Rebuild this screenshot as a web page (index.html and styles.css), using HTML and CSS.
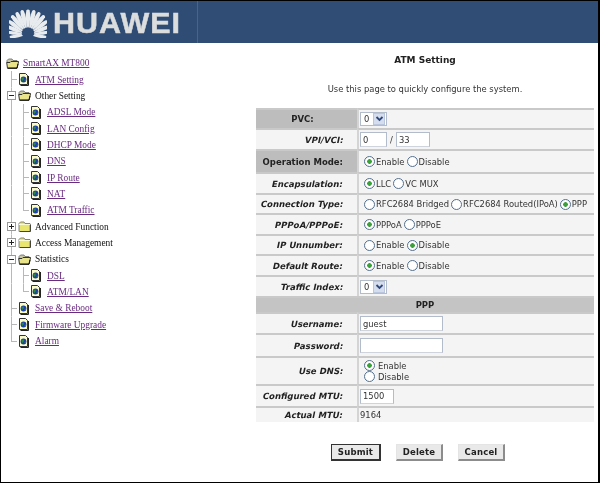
FILE: index.html
```html
<!DOCTYPE html>
<html lang="en">
<head>
<meta charset="utf-8">
<title>ATM Setting</title>
<link rel="stylesheet" href="styles.css">
</head>
<body>
<svg class="defs" width="0" height="0" aria-hidden="true">
  <symbol id="doc" viewBox="0 0 11 13">
    <path d="M1.5 .5H7.5L9.5 2.5V11.5H1.5Z" fill="#fbfbc8" stroke="#333"/>
    <path d="M2.5 12.5H10.5V3" fill="none" stroke="#222"/>
    <circle cx="5.5" cy="6.5" r="2.9" fill="#1c3fa8"/>
    <path d="M3.2 5.5 5.5 4.2 6 6 4.5 8Z" fill="#2d8a3a"/>
    <path d="M6.5 7 8.2 6.5 7.3 8.6Z" fill="#2d8a3a"/>
  </symbol>
  <symbol id="open" viewBox="0 0 13 11">
    <path d="M1 2.5 2.5 1H6L7 2.5H11V5H1Z" fill="#c9c9a8" stroke="#666" stroke-width=".8"/>
    <path d="M.7 4.5H4L5 3.5H12.6L11 10.4H1.5Z" fill="#e9e48a" stroke="#333"/>
    <path d="M2 10H11L12 6" fill="none" stroke="#111"/>
  </symbol>
  <symbol id="closed" viewBox="0 0 13 11">
    <path d="M1 2.5 2.5 1H6L7 2.5H12V10.5H1Z" fill="#e8e670" stroke="#777" stroke-width=".9"/>
    <path d="M1 3.5H12" stroke="#fafad0"/>
    <path d="M2 10.5H12.5V3.5" fill="none" stroke="#444"/>
  </symbol>
  <symbol id="petal" viewBox="-30 -30 60 60" overflow="visible">
    <path d="M-.7-7.5C-2.2-14-2.8-19-1.7-24.5-.9-26 .9-26 1.7-24.5 2.8-19 2.2-14 .7-7.5Z" fill="#e9ecee"/>
  </symbol>
  <symbol id="arrow" viewBox="0 0 9 8">
    <path d="M1.5 2 4.5 5 7.5 2" fill="none" stroke="#30487a" stroke-width="1.8"/>
  </symbol>
</svg>

<header class="top">
  <div class="logo">
    <svg class="shell" width="38" height="30" viewBox="-19 -27 38 30" aria-hidden="true">
      <g class="petals">
        <use href="#petal" x="-30" y="-30" width="60" height="60" transform="rotate(-96) scale(.72)"/>
        <use href="#petal" x="-30" y="-30" width="60" height="60" transform="rotate(-82) scale(.8)"/>
        <use href="#petal" x="-30" y="-30" width="60" height="60" transform="rotate(-68) scale(.88)"/>
        <use href="#petal" x="-30" y="-30" width="60" height="60" transform="rotate(-54) scale(.94)"/>
        <use href="#petal" x="-30" y="-30" width="60" height="60" transform="rotate(-40)"/>
        <use href="#petal" x="-30" y="-30" width="60" height="60" transform="rotate(-27)"/>
        <use href="#petal" x="-30" y="-30" width="60" height="60" transform="rotate(-14)"/>
        <use href="#petal" x="-30" y="-30" width="60" height="60"/>
        <use href="#petal" x="-30" y="-30" width="60" height="60" transform="rotate(14)"/>
        <use href="#petal" x="-30" y="-30" width="60" height="60" transform="rotate(27)"/>
        <use href="#petal" x="-30" y="-30" width="60" height="60" transform="rotate(40)"/>
        <use href="#petal" x="-30" y="-30" width="60" height="60" transform="rotate(54) scale(.94)"/>
        <use href="#petal" x="-30" y="-30" width="60" height="60" transform="rotate(68) scale(.88)"/>
        <use href="#petal" x="-30" y="-30" width="60" height="60" transform="rotate(82) scale(.8)"/>
        <use href="#petal" x="-30" y="-30" width="60" height="60" transform="rotate(96) scale(.72)"/>
      </g>
    </svg>
    <span class="brand">HUAWEI</span>
  </div>
</header>

<div class="content">
  <nav class="tree">
    <div class="row"><span class="ico"><svg width="13" height="11"><use href="#open"/></svg></span><a href="#">SmartAX MT800</a></div>
    <div class="row"><span class="c tee"></span><span class="ico"><svg width="11" height="13"><use href="#doc"/></svg></span><a href="#">ATM Setting</a></div>
    <div class="row"><span class="c v"><i class="box minus"></i></span><span class="ico"><svg width="13" height="11"><use href="#open"/></svg></span><span class="lbl">Other Setting</span></div>
    <div class="row"><span class="c v"></span><span class="c tee"></span><span class="ico"><svg width="11" height="13"><use href="#doc"/></svg></span><a href="#">ADSL Mode</a></div>
    <div class="row"><span class="c v"></span><span class="c tee"></span><span class="ico"><svg width="11" height="13"><use href="#doc"/></svg></span><a href="#">LAN Config</a></div>
    <div class="row"><span class="c v"></span><span class="c tee"></span><span class="ico"><svg width="11" height="13"><use href="#doc"/></svg></span><a href="#">DHCP Mode</a></div>
    <div class="row"><span class="c v"></span><span class="c tee"></span><span class="ico"><svg width="11" height="13"><use href="#doc"/></svg></span><a href="#">DNS</a></div>
    <div class="row"><span class="c v"></span><span class="c tee"></span><span class="ico"><svg width="11" height="13"><use href="#doc"/></svg></span><a href="#">IP Route</a></div>
    <div class="row"><span class="c v"></span><span class="c tee"></span><span class="ico"><svg width="11" height="13"><use href="#doc"/></svg></span><a href="#">NAT</a></div>
    <div class="row"><span class="c v"></span><span class="c end"></span><span class="ico"><svg width="11" height="13"><use href="#doc"/></svg></span><a href="#">ATM Traffic</a></div>
    <div class="row"><span class="c v"><i class="box plus"></i></span><span class="ico"><svg width="13" height="11"><use href="#closed"/></svg></span><span class="lbl">Advanced Function</span></div>
    <div class="row"><span class="c v"><i class="box plus"></i></span><span class="ico"><svg width="13" height="11"><use href="#closed"/></svg></span><span class="lbl">Access Management</span></div>
    <div class="row"><span class="c v"><i class="box minus"></i></span><span class="ico"><svg width="13" height="11"><use href="#open"/></svg></span><span class="lbl">Statistics</span></div>
    <div class="row"><span class="c v"></span><span class="c tee"></span><span class="ico"><svg width="11" height="13"><use href="#doc"/></svg></span><a href="#">DSL</a></div>
    <div class="row"><span class="c v"></span><span class="c end"></span><span class="ico"><svg width="11" height="13"><use href="#doc"/></svg></span><a href="#">ATM/LAN</a></div>
    <div class="row"><span class="c tee"></span><span class="ico"><svg width="11" height="13"><use href="#doc"/></svg></span><a href="#">Save &amp; Reboot</a></div>
    <div class="row"><span class="c tee"></span><span class="ico"><svg width="11" height="13"><use href="#doc"/></svg></span><a href="#">Firmware Upgrade</a></div>
    <div class="row"><span class="c end"></span><span class="ico"><svg width="11" height="13"><use href="#doc"/></svg></span><a href="#">Alarm</a></div>
  </nav>

  <main class="main">
    <h1>ATM Setting</h1>
    <p class="intro">Use this page to quickly configure the system.</p>
    <form>
      <table class="form">
        <tr class="h20"><th class="grey center">PVC:</th><td><span class="sel"><span class="selv">0</span><span class="btn"><svg width="9" height="8"><use href="#arrow"/></svg></span></span></td></tr>
        <tr class="h21"><th><span class="slant">VPI/VCI:</span></th><td><input class="t w27" type="text" value="0"><span class="sl">/</span><input class="t w34" type="text" value="33"></td></tr>
        <tr class="h23"><th class="grey">Operation Mode:</th><td><label><input type="radio" name="op" checked>Enable</label><label><input type="radio" name="op">Disable</label></td></tr>
        <tr class="h21"><th><span class="slant">Encapsulation:</span></th><td><label><input type="radio" name="en" checked>LLC</label><label><input type="radio" name="en">VC MUX</label></td></tr>
        <tr class="h20"><th><span class="slant">Connection Type:</span></th><td><label><input type="radio" name="ct">RFC2684 Bridged</label><label><input type="radio" name="ct">RFC2684 Routed(IPoA)</label><label><input type="radio" name="ct" checked>PPP</label></td></tr>
        <tr class="h21"><th><span class="slant">PPPoA/PPPoE:</span></th><td><label><input type="radio" name="pp" checked>PPPoA</label><label><input type="radio" name="pp">PPPoE</label></td></tr>
        <tr class="h20"><th><span class="slant">IP Unnumber:</span></th><td><label><input type="radio" name="ip">Enable</label><label><input type="radio" name="ip" checked>Disable</label></td></tr>
        <tr class="h21"><th><span class="slant">Default Route:</span></th><td><label><input type="radio" name="dr" checked>Enable</label><label><input type="radio" name="dr">Disable</label></td></tr>
        <tr class="h21"><th><span class="slant">Traffic Index:</span></th><td><span class="sel"><span class="selv">0</span><span class="btn"><svg width="9" height="8"><use href="#arrow"/></svg></span></span></td></tr>
        <tr class="h16"><th class="band" colspan="2">PPP</th></tr>
        <tr class="h21"><th><span class="slant">Username:</span></th><td><input class="t w83" type="text" value="guest"></td></tr>
        <tr class="h23"><th><span class="slant">Password:</span></th><td><input class="t w83" type="password"></td></tr>
        <tr class="h28"><th><span class="slant">Use DNS:</span></th><td class="stack"><label><input type="radio" name="dns" checked>Enable</label><label><input type="radio" name="dns">Disable</label></td></tr>
        <tr class="h22"><th><span class="slant">Configured MTU:</span></th><td><input class="t w34" type="text" value="1500"></td></tr>
        <tr class="h16"><th><span class="slant">Actual MTU:</span></th><td class="val">9164</td></tr>
      </table>
      <div class="actions">
        <button type="button" class="b first">Submit</button>
        <button type="button" class="b">Delete</button>
        <button type="button" class="b">Cancel</button>
      </div>
    </form>
  </main>
</div>
</body>
</html>
```
FILE: styles.css
```css
* { box-sizing: border-box; }
html, body { margin: 0; padding: 0; }
body {
  width: 600px;
  height: 483px;
  border: 1px solid #000;
  border-right-width: 2px;
  background: #fff;
  overflow: hidden;
  display: flex;
  flex-direction: column;
  font-family: "DejaVu Sans", Verdana, sans-serif;
}
.defs { display: block; height: 0; }

/* header */
.top {
  height: 42px;
  flex: none;
  background: linear-gradient(to right, #2f4c75 196px, #46648c 196px, #46648c 197px, #304d76 197px);
}
.logo { display: flex; align-items: center; height: 100%; padding-left: 8px; filter: blur(.35px); }
.shell { flex: none; margin-top: 2px; }
.brand {
  margin: 2px 0 0 6px;
  font: bold 29px/1 "Liberation Sans", Arial, sans-serif;
  letter-spacing: 1px;
  color: #dcdddd;
  -webkit-text-stroke: .5px #dcdddd;
  transform: scaleX(1.05);
  transform-origin: left center;
}

.content { display: flex; flex: 1; min-height: 0; filter: blur(.35px); }

/* tree */
.tree { width: 255px; flex: none; padding: 12px 0 0 4px; }
.row {
  height: 16.35px;
  display: flex;
  align-items: stretch;
  font: 9.4px/16px "Liberation Serif", "Times New Roman", serif;
  white-space: nowrap;
}
.row a { color: #6a2a80; align-self: center; }
.lbl { color: #111; align-self: center; }
.c { width: 12px; flex: none; display: flex; align-items: center; justify-content: center; }
.ico { width: 18px; flex: none; display: flex; align-items: center; padding-left: 1px; }
.ico svg { display: block; }
.v { background: linear-gradient(#b8b8b8, #b8b8b8) center / 1px 100% no-repeat; }
.tee {
  background:
    linear-gradient(#b8b8b8, #b8b8b8) center / 1px 100% no-repeat,
    linear-gradient(#b8b8b8, #b8b8b8) right center / 6px 1px no-repeat;
}
.end {
  background:
    linear-gradient(#b8b8b8, #b8b8b8) 6px 0 / 1px 50% no-repeat,
    linear-gradient(#b8b8b8, #b8b8b8) right center / 6px 1px no-repeat;
}
.box {
  width: 9px; height: 9px;
  border: 1px solid #999;
  background-color: #fff;
  background-repeat: no-repeat;
}
.minus { background-image: linear-gradient(#222, #222); background-size: 5px 1px; background-position: center; }
.plus {
  background-image: linear-gradient(#222, #222), linear-gradient(#222, #222);
  background-size: 5px 1px, 1px 5px;
  background-position: center, center;
}

/* main */
.main { flex: 1; min-width: 0; padding-right: 4px; }
h1 {
  margin: 11px 0 0;
  height: 13px;
  font-size: 9px;
  line-height: 13px;
  font-weight: bold;
  text-align: center;
  color: #222;
}
.intro {
  margin: 16px 0 0;
  height: 13px;
  font-size: 8.4px;
  line-height: 13px;
  text-align: center;
  color: #333;
}
.form {
  margin-top: 12px;
  width: 338px;
  border-collapse: separate;
  border-spacing: 0;
  table-layout: fixed;
  font-size: 8.4px;
  color: #333;
}
.form th, .form td {
  padding: 0;
  background: #f4f4f4;
  border-top: 2px solid #c9c9c9;
}
.form th {
  width: 101px;
  padding-right: 14px;
  text-align: right;
  font-size: 8.5px;
  font-weight: bold;
  color: #222;
  white-space: nowrap;
}
.slant { display: inline-block; transform: skewX(-12deg); }
.form td { padding-left: 1px; border-left: 2px solid #d4d4d4; white-space: nowrap; }
.form th.grey { background: #bdbdbd; }
.form th.center { text-align: center; padding-right: 8px; }
.form th.band { background: #c4c4c4; text-align: center; padding: 0; width: auto; }
.h16 { height: 16px; }
.h20 { height: 20px; }
.h21 { height: 21px; }
.h22 { height: 22px; }
.h23 { height: 23px; }
.h28 { height: 28px; }

label { display: inline-flex; align-items: center; vertical-align: middle; }
label:first-child { margin-left: 1px; }
input[type="radio"] {
  appearance: none;
  width: 11px;
  height: 11px;
  margin: 0 1px 0 2px;
  border: 1px solid #54708f;
  border-radius: 50%;
  background: #fff;
  flex: none;
}
label:first-child input[type="radio"] { margin-left: 3px; }
input[type="radio"]:checked { background: radial-gradient(circle, #3aa03a 0 2px, #fff 2.6px); }
.stack label { display: flex; height: 11px; }
.stack label input { margin-right: 3px; }
.stack label:last-child { margin-left: 1px; }
.stack label:last-child input { margin-left: 3px; }
.val { color: #333; }

input.t {
  height: 15px;
  padding: 0 2px;
  border: 1px solid #b3bccb;
  border-bottom-color: #cfd4dc;
  background: #fff;
  font: 8.4px "DejaVu Sans", sans-serif;
  color: #333;
  vertical-align: middle;
}
.w27 { width: 27px; }
.w34 { width: 34px; }
.w83 { width: 83px; }
.sl { display: inline-block; width: 9px; text-align: center; vertical-align: middle; }

.sel {
  display: inline-flex;
  align-items: center;
  gap: 3px;
  height: 14px;
  width: 27px;
  padding: 0 1px 0 3px;
  border: 1px solid #b3bccb;
  background: #fff;
  vertical-align: middle;
}
.selv { flex: 1; }
.btn {
  width: 12px;
  height: 12px;
  display: flex;
  align-items: center;
  justify-content: center;
  background: #d5deef;
  border: 1px solid #b9c6de;
}
.btn svg { display: block; }

.actions { display: flex; margin: 22px 0 0 75px; gap: 15px; }
.b {
  width: 47px;
  height: 17px;
  padding: 0;
  background: #e9e9e9;
  border: 1px solid #e4e4e4;
  border-right: 2px solid #8c8c8c;
  border-bottom: 2px solid #8c8c8c;
  font: bold 8.5px "DejaVu Sans", sans-serif;
  letter-spacing: .2px;
  color: #222;
}
.first { width: 50px; border: 1px solid #333; border-right-width: 2px; border-bottom-width: 2px; }
```
